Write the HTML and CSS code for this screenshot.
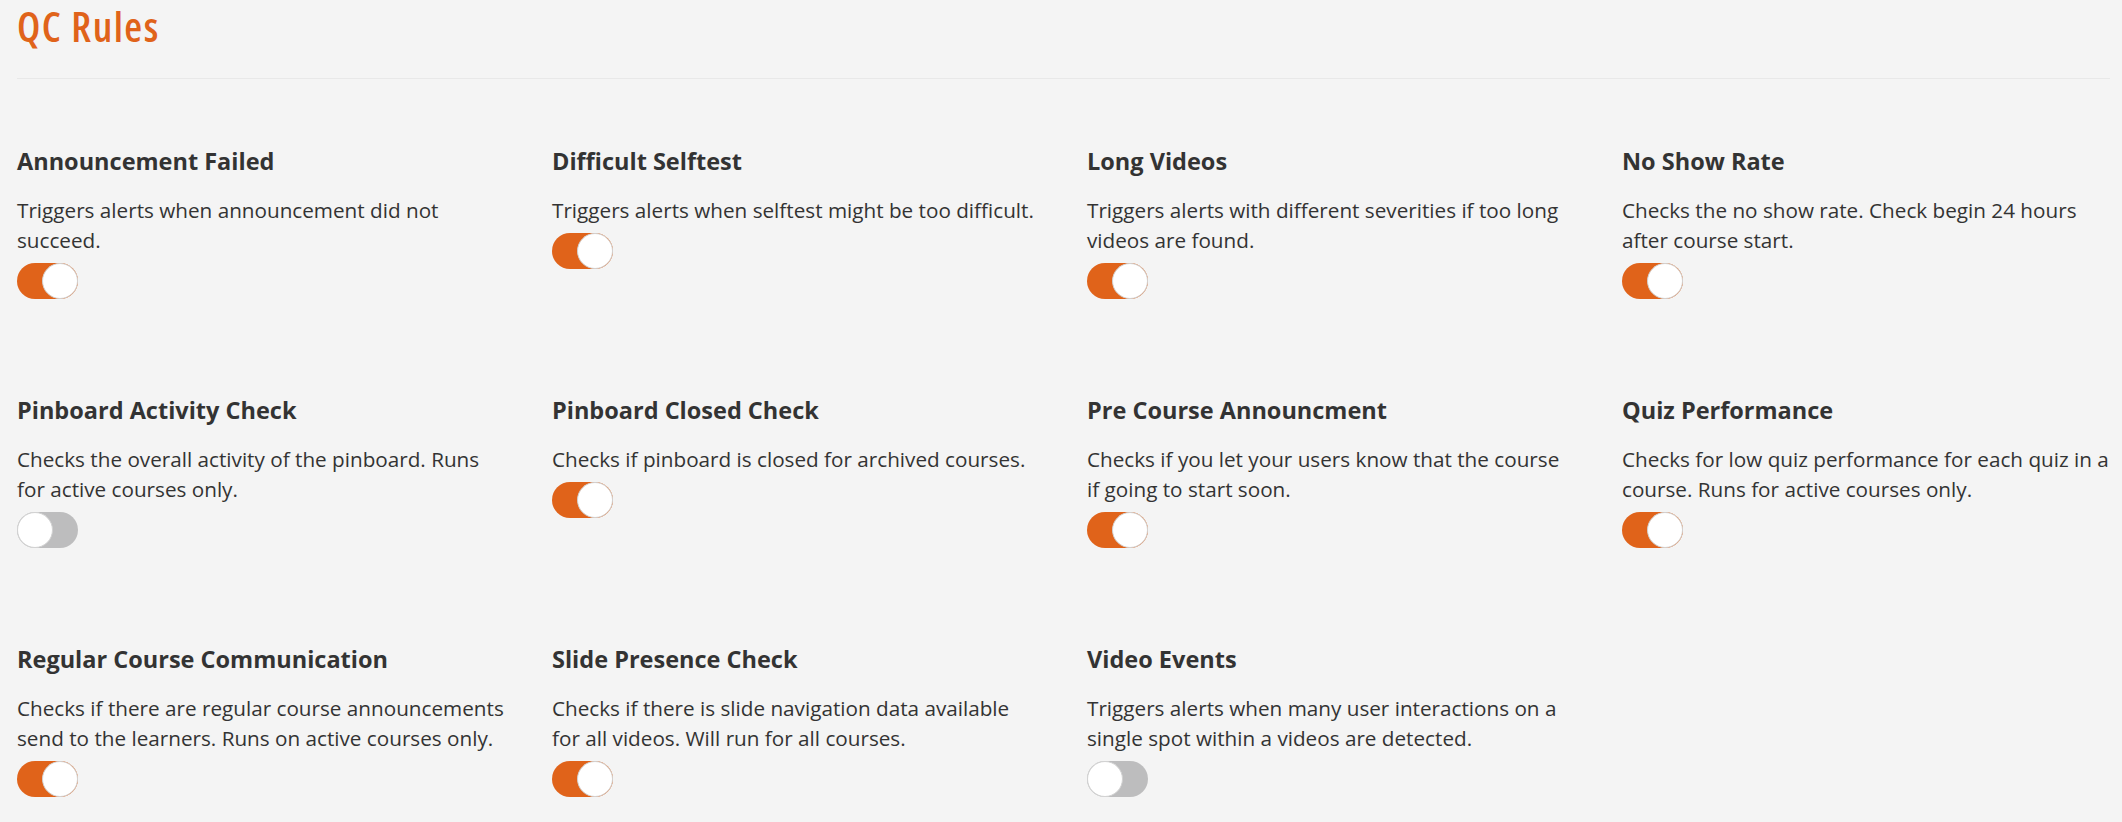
FILE: index.html
```html
<!DOCTYPE html>
<html lang="en">
<head>
<meta charset="utf-8">
<title>QC Rules</title>
<link rel="stylesheet" href="styles.css">
</head>
<body>
<main class="page">
  <h1 class="page-title">QC Rules</h1>
  <hr class="divider">
  <section class="rules">
    <div class="rule">
      <h3 class="rule-name">Announcement Failed</h3>
      <p class="rule-desc">Triggers alerts when announcement did not succeed.</p>
      <span class="toggle on"><span class="knob"></span></span>
    </div>
    <div class="rule">
      <h3 class="rule-name">Difficult Selftest</h3>
      <p class="rule-desc">Triggers alerts when selftest might be too difficult.</p>
      <span class="toggle on"><span class="knob"></span></span>
    </div>
    <div class="rule">
      <h3 class="rule-name">Long Videos</h3>
      <p class="rule-desc">Triggers alerts with different severities if too long videos are found.</p>
      <span class="toggle on"><span class="knob"></span></span>
    </div>
    <div class="rule">
      <h3 class="rule-name">No Show Rate</h3>
      <p class="rule-desc">Checks the no show rate. Check begin 24 hours after course start.</p>
      <span class="toggle on"><span class="knob"></span></span>
    </div>
    <div class="rule">
      <h3 class="rule-name">Pinboard Activity Check</h3>
      <p class="rule-desc">Checks the overall activity of the pinboard. Runs for active courses only.</p>
      <span class="toggle off"><span class="knob"></span></span>
    </div>
    <div class="rule">
      <h3 class="rule-name">Pinboard Closed Check</h3>
      <p class="rule-desc">Checks if pinboard is closed for archived courses.</p>
      <span class="toggle on"><span class="knob"></span></span>
    </div>
    <div class="rule">
      <h3 class="rule-name">Pre Course Announcment</h3>
      <p class="rule-desc">Checks if you let your users know that the course if going to start soon.</p>
      <span class="toggle on"><span class="knob"></span></span>
    </div>
    <div class="rule">
      <h3 class="rule-name">Quiz Performance</h3>
      <p class="rule-desc">Checks for low quiz performance for each quiz in a course. Runs for active courses only.</p>
      <span class="toggle on"><span class="knob"></span></span>
    </div>
    <div class="rule">
      <h3 class="rule-name">Regular Course Communication</h3>
      <p class="rule-desc">Checks if there are regular course announcements send to the learners. Runs on active courses only.</p>
      <span class="toggle on"><span class="knob"></span></span>
    </div>
    <div class="rule">
      <h3 class="rule-name">Slide Presence Check</h3>
      <p class="rule-desc">Checks if there is slide navigation data available for all videos. Will run for all courses.</p>
      <span class="toggle on"><span class="knob"></span></span>
    </div>
    <div class="rule">
      <h3 class="rule-name">Video Events</h3>
      <p class="rule-desc">Triggers alerts when many user interactions on a single spot within a videos are detected.</p>
      <span class="toggle off"><span class="knob"></span></span>
    </div>
  </section>
</main>
</body>
</html>
```

FILE: styles.css
```css
html, body {
  margin: 0;
  padding: 0;
  background: #f4f4f4;
}

body {
  font-family: "Open Sans", "Noto Sans", sans-serif;
  color: #333333;
}

.page {
  padding: 0 12px 0 17px;
}

.page-title {
  margin: 0;
  padding-top: 3px;
  font-family: "Open Sans", "Noto Sans", sans-serif;
  font-stretch: 75%;
  font-weight: 600;
  font-size: 41px;
  letter-spacing: 1.5px;
  line-height: 46px;
  color: #e0631a;
}

.divider {
  margin: 29px 0 0;
  border: 0;
  height: 1px;
  background: #e8e8e8;
}

.rules {
  display: grid;
  grid-template-columns: repeat(4, 488px);
  column-gap: 47px;
  row-gap: 96px;
  margin-top: 67px;
}

.rule {
  display: flex;
  flex-direction: column;
  align-items: flex-start;
}

.rule-name {
  margin: 0 0 19px;
  font-size: 23.5px;
  font-weight: 700;
  line-height: 30px;
  color: #333333;
}

.rule-desc {
  margin: 0 0 8px;
  font-size: 20.7px;
  line-height: 30px;
}

.toggle {
  position: relative;
  display: block;
  width: 61px;
  height: 36px;
  border-radius: 18px;
  background: #e0631a;
}

.toggle.off {
  background: #bdbdbe;
}

.knob {
  position: absolute;
  top: 0;
  width: 36px;
  height: 36px;
  box-sizing: border-box;
  border-radius: 50%;
  background: #ffffff;
  border: 1px solid #d2d2d2;
}

.toggle.on .knob {
  right: 0;
}

.toggle.off .knob {
  left: 0;
}
```
